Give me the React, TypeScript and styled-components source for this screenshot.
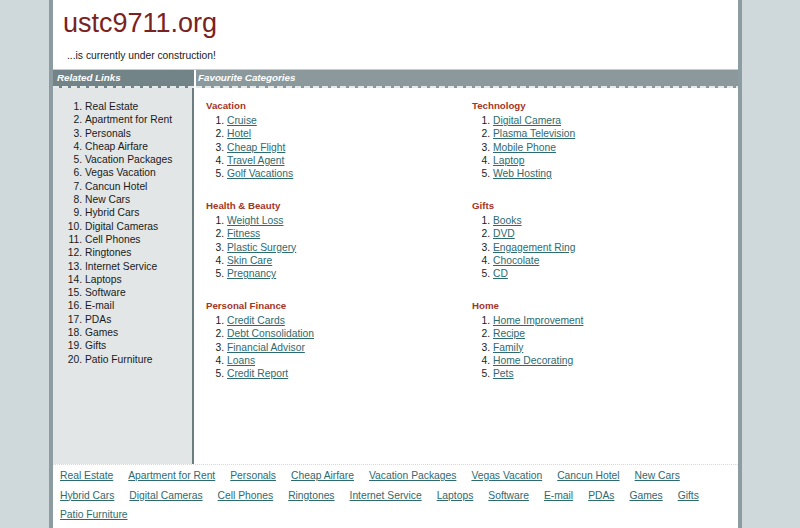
import React from "react";
import styled, { createGlobalStyle } from "styled-components";

const relatedLinks = [
    "Real Estate",
    "Apartment for Rent",
    "Personals",
    "Cheap Airfare",
    "Vacation Packages",
    "Vegas Vacation",
    "Cancun Hotel",
    "New Cars",
    "Hybrid Cars",
    "Digital Cameras",
    "Cell Phones",
    "Ringtones",
    "Internet Service",
    "Laptops",
    "Software",
    "E-mail",
    "PDAs",
    "Games",
    "Gifts",
    "Patio Furniture",
];

const categories = [
    { title: "Vacation", items: ["Cruise", "Hotel", "Cheap Flight", "Travel Agent", "Golf Vacations"] },
    { title: "Technology", items: ["Digital Camera", "Plasma Television", "Mobile Phone", "Laptop", "Web Hosting"] },
    { title: "Health & Beauty", items: ["Weight Loss", "Fitness", "Plastic Surgery", "Skin Care", "Pregnancy"] },
    { title: "Gifts", items: ["Books", "DVD", "Engagement Ring", "Chocolate", "CD"] },
    { title: "Personal Finance", items: ["Credit Cards", "Debt Consolidation", "Financial Advisor", "Loans", "Credit Report"] },
    { title: "Home", items: ["Home Improvement", "Recipe", "Family", "Home Decorating", "Pets"] },
];

const GlobalStyle = createGlobalStyle`
  body {
    margin: 0;
    background: #cfd9dc;
    font-family: "Liberation Sans", Arial, sans-serif;
    font-size: 10.3px;
    color: #1a1a1a;
  }
`;

const Page = styled.div`
  width: 685px;
  margin-left: 49px;
  border-left: 4px solid #8d9ca0;
  border-right: 4px solid #8d9ca0;
  background: #fff;
  min-height: 528px;
`;

const Header = styled.div`
  height: 69px;
  overflow: hidden;
`;

const Title = styled.h1`
  margin: 10px 0 0 10px;
  font-size: 27px;
  line-height: 27px;
  font-weight: normal;
  color: #7a2222;
`;

const Tagline = styled.p`
  margin: 12px 0 0 14px;
  line-height: 13px;
`;

const BarRow = styled.div`
  display: grid;
  grid-template-columns: 141px 1fr;
  column-gap: 2px;
  border-top: 1px solid #c4cdcf;
`;

const BarCell = styled.div<{ $dark?: boolean }>`
  box-sizing: border-box;
  height: 18px;
  line-height: 16px;
  padding: 0 0 2px ${(p) => (p.$dark ? "4px" : "2px")};
  color: #fff;
  font-size: 9.8px;
  font-weight: bold;
  font-style: italic;
  background-color: ${(p) => (p.$dark ? "#728488" : "#8b999c")};
  background-image: repeating-linear-gradient(
    90deg,
    #e4e9ea 0 6px,
    transparent 6px 9px
  );
  background-size: 100% 2px;
  background-position: 0 100%;
  background-repeat: no-repeat;
`;

const Body = styled.div`
  display: grid;
  grid-template-columns: 141px 1fr;
  min-height: 376px;
`;

const Sidebar = styled.div`
  background: #e2e6e7;
  border-right: 2px solid #6c7d81;
  padding-top: 12px;
`;

const SideList = styled.ol`
  margin: 0;
  padding-left: 32px;
  line-height: 13.3px;
`;

const Main = styled.div`
  display: grid;
  grid-template-columns: 266px 1fr;
  row-gap: 18.5px;
  align-content: start;
  padding: 11px 10px 0 12px;
`;

const Block = styled.div``;

const Heading = styled.h3`
  margin: 0 0 2px 0;
  font-size: 9.7px;
  line-height: 13px;
  color: #a33526;
`;

const CatList = styled.ol`
  margin: 0;
  padding-left: 21px;
  line-height: 13.3px;
`;

const Link = styled.a`
  color: #2d6b70;
  text-decoration: underline;
`;

const Footer = styled.div`
  border-top: 1px dotted #d4dadb;
  padding: 1px 20px 0 7px;
  display: flex;
  flex-wrap: wrap;
  column-gap: 15px;
  line-height: 19.5px;
`;

export default function App() {
    return (
        <>
            <GlobalStyle />
            <Page>
                <Header>
                    <Title>ustc9711.org</Title>
                    <Tagline>...is currently under construction!</Tagline>
                </Header>
                <BarRow>
                    <BarCell $dark>Related Links</BarCell>
                    <BarCell>Favourite Categories</BarCell>
                </BarRow>
                <Body>
                    <Sidebar>
                        <SideList>
                            {relatedLinks.map((l) => (
                                <li key={l}>{l}</li>
                            ))}
                        </SideList>
                    </Sidebar>
                    <Main>
                        {categories.map((c) => (
                            <Block key={c.title}>
                                <Heading>{c.title}</Heading>
                                <CatList>
                                    {c.items.map((i) => (
                                        <li key={i}>
                                            <Link href="#">{i}</Link>
                                        </li>
                                    ))}
                                </CatList>
                            </Block>
                        ))}
                    </Main>
                </Body>
                <Footer>
                    {relatedLinks.map((l) => (
                        <Link key={l} href="#">
                            {l}
                        </Link>
                    ))}
                </Footer>
            </Page>
        </>
    );
}
